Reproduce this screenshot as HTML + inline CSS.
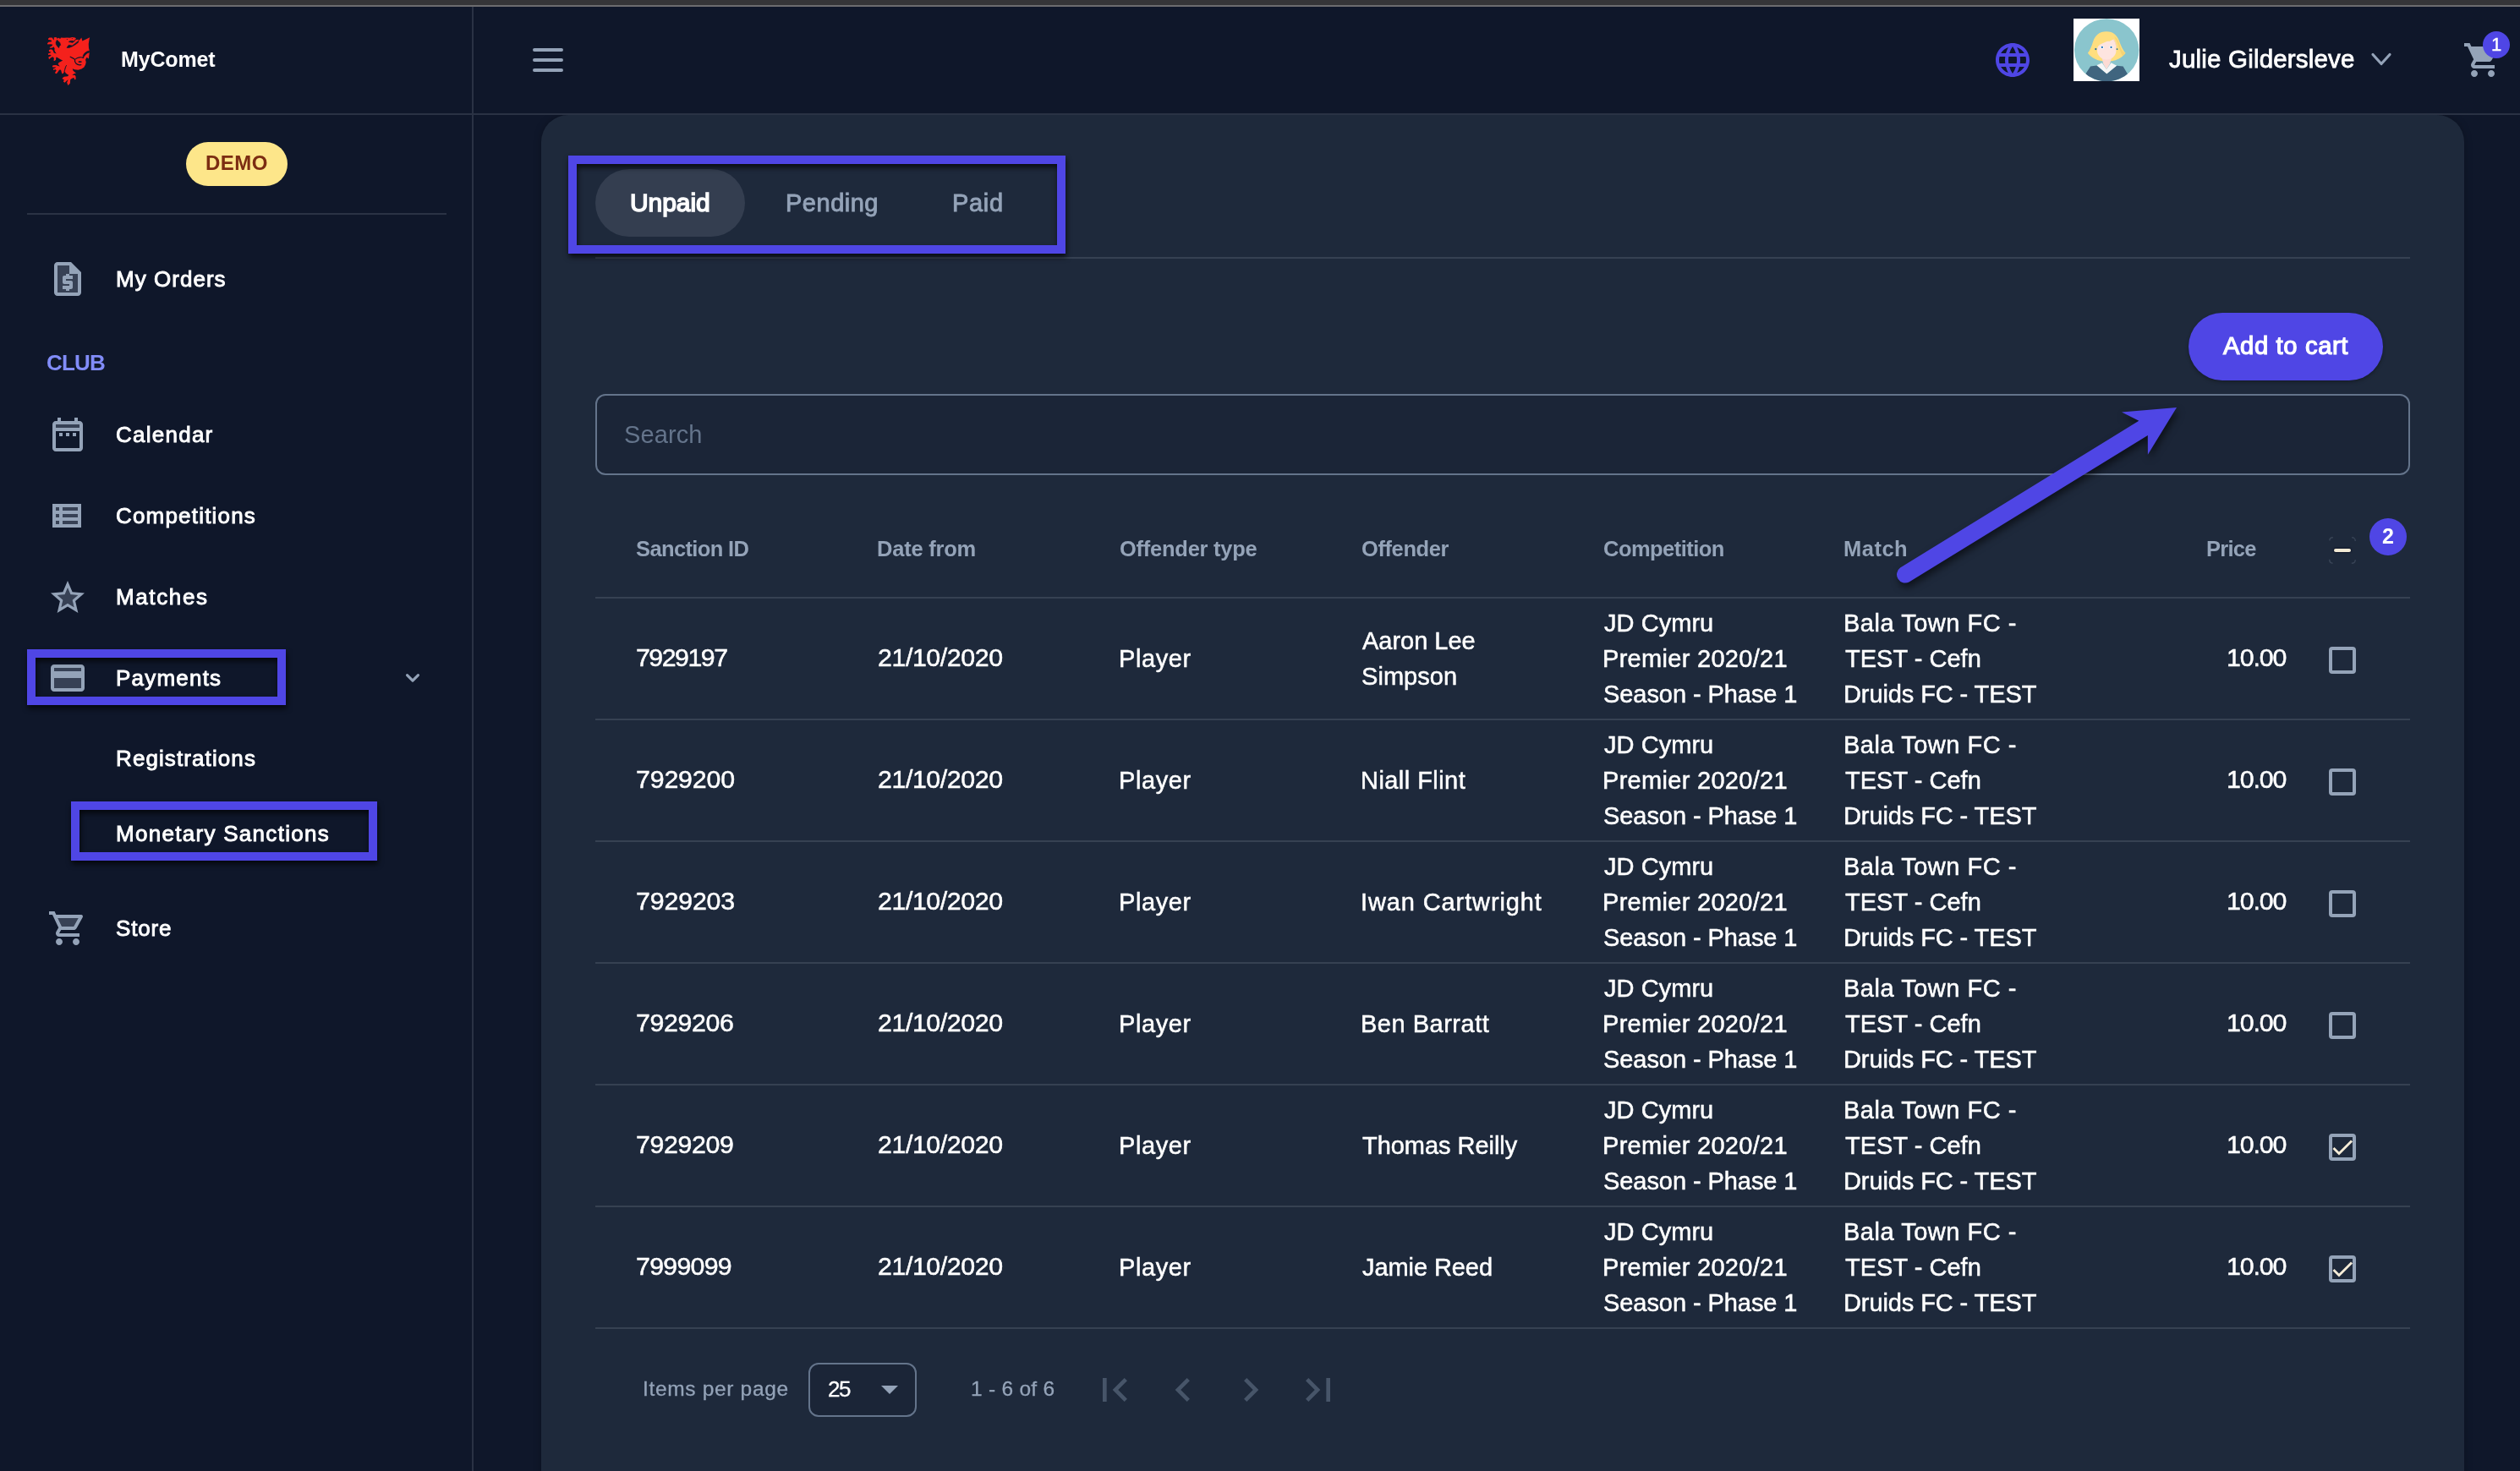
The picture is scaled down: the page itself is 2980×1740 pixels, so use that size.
<!DOCTYPE html><html><head><meta charset="utf-8"><title>MyComet</title><style>
*{box-sizing:border-box;margin:0;padding:0}
html,body{width:2980px;height:1740px;background:#0f172a}
body{position:relative;font-family:"Liberation Sans",sans-serif;color:#fff;-webkit-font-smoothing:antialiased}
.a{position:absolute}
.t{position:absolute;white-space:nowrap;line-height:40px;height:40px;will-change:transform}
.nav{font-size:26px;margin-top:-.5px;color:#fff;-webkit-text-stroke:.9px #fff}
.td{font-size:29px;color:#fff;-webkit-text-stroke:.5px #fff;margin-top:-.9px}
.num{font-size:30.3px;margin-top:-1.1px}
.th{font-size:25.5px;font-weight:bold;color:#94a3b8;margin-top:-1.3px}
.mut{color:#94a3b8}
.ic{position:absolute;width:48px;height:48px;fill:#94a3b8}
.ic .tt{opacity:.3}
.hl{position:absolute;border:10px solid #4f46e5;filter:drop-shadow(1.5px 4px 3px rgba(0,0,0,.7))}
.sep{position:absolute;left:704px;width:2146px;height:2px;background:#364152}
.cb{position:absolute;left:2754px;width:32px;height:32px;border:4px solid #94a3b8;border-radius:4px}
.cb svg{position:absolute;left:-4px;top:-4px;width:32px;height:32px}
.pg{position:absolute;top:1616px;width:56px;height:56px;fill:#475569}
</style></head><body>
<div class="a" style="left:0;top:0;width:2980px;height:6px;background:#353538"></div>
<div class="a" style="left:0;top:6px;width:2980px;height:2px;background:#6c6c6f"></div>
<div class="a" style="left:558px;top:8px;width:2px;height:1732px;background:#2a3244"></div>
<div class="a" style="left:0;top:134px;width:2980px;height:2px;background:#2a3244"></div>
<div class="a" style="left:560px;top:136px;width:2420px;height:1604px;overflow:hidden"><div class="a" style="left:80px;top:0;width:2274px;height:1700px;background:#1e293b;border-radius:32px;box-shadow:0 0 10px rgba(0,0,0,.25)"></div></div>
<svg class="a" style="left:52px;top:40px;width:60px;height:63px" viewBox="52 40 60 63"><path fill="#f4211c" d="M63.67 44.40L65.33 43.93L67.24 44.52L67.60 45.95L68.67 45.12L69.62 44.76L70.57 45.71L71.76 45.48L71.88 44.40L75.81 44.64L79.38 44.40L82.48 44.76L85.33 43.93L88.67 44.40L89.98 45.48L89.38 46.55L87.71 47.26L90.57 46.90L92.83 46.79L92.48 47.86L93.90 47.38L96.40 44.52L97.36 48.57L106.17 44.17L105.45 47.14L104.74 51.90L104.98 56.67L105.69 59.52L105.81 62.62L105.21 66.19L104.98 69.52L103.19 68.33L102.36 68.10L101.05 70.71L101.76 73.48L101.05 76.57L99.38 79.43L96.52 81.57L92.48 82.76L88.19 82.29L85.81 81.33L86.29 83.24L88.19 85.14L90.10 86.33L87.24 87.52L85.33 88.71L88.67 88.95L89.62 90.86L89.50 93.95L88.31 94.19L87.24 91.81L84.38 93.24L83.19 94.19L82.95 97.76L82.71 98.71L80.57 101.10L79.86 99.43L79.14 97.76L80.57 94.19L79.38 94.90L76.52 97.76L74.86 96.57L75.81 94.19L74.38 93.48L73.43 93.24L74.14 92.05L75.81 90.86L80.10 90.14L81.29 88.71L79.38 87.76L77.71 86.57L76.76 84.67L75.57 85.38L74.74 86.81L73.67 87.40L72.95 86.10L72.24 83.24L71.05 82.29L69.62 83.24L69.14 84.19L67.24 86.81L66.05 87.29L64.98 86.10L66.76 83.24L65.33 82.05L63.19 82.88L62.83 81.57L65.33 80.38L66.29 79.55L62.48 79.43L61.76 78.48L62.71 77.17L66.29 76.93L68.67 78.00L70.81 78.60L69.14 76.57L68.67 75.62L69.62 73.95L73.43 72.05L74.14 71.57L72.48 70.86L71.05 69.90L68.67 68.48L66.76 67.62L66.29 68.10L66.05 70.71L64.62 72.02L63.43 71.67L63.90 69.29L63.19 67.86L62.00 67.14L59.86 68.57L58.43 70.12L57.60 69.29L57.36 67.38L59.86 66.19L60.57 65.00L58.90 64.76L57.12 65.00L56.88 63.57L59.86 62.14L60.33 61.43L57.95 60.95L57.83 59.29L59.86 58.33L62.00 58.81L63.19 60.95L63.67 62.38L66.76 63.57L65.33 61.43L64.38 59.52L64.62 57.14L63.43 55.24L62.00 56.43L59.14 56.67L58.55 55.95L61.52 54.29L62.24 52.86L59.86 52.14L56.29 52.38L55.93 51.19L57.48 49.76L60.81 49.29L61.05 48.10L59.14 47.14L57.12 46.90L56.88 45.71L58.43 44.40L61.52 44.40L62.71 45.95L63.19 47.62L63.90 46.19Z"/><path fill="#0f172a" stroke="#0f172a" stroke-width=".55" stroke-linejoin="round" d="M67.48 47.14L70.81 50.48L71.76 53.33L70.33 54.29L69.62 56.67L68.19 55.24L66.29 52.38L66.05 50.00ZM81.17 49.52L82.95 48.45L85.33 48.33L87.24 48.81L89.14 47.14L87.71 49.05L85.81 50.48L83.67 50.00ZM79.02 56.43L80.10 54.52L81.52 53.33L85.33 54.05L88.19 51.90L91.29 49.52L92.95 48.33L92.48 50.24L89.14 52.86L85.33 55.00L81.76 56.43ZM105.57 60.00L102.71 60.95L100.10 62.86L98.43 65.24L97.95 68.57L99.38 66.90L101.05 64.76L103.43 62.86L105.57 62.14ZM78.79 77.05L77.95 78.48L76.76 82.29L75.93 85.14L76.52 82.76L77.48 79.19Z"/><ellipse cx="79.38" cy="46.43" rx="0.67" ry="0.48" fill="#0f172a"/><ellipse cx="85.33" cy="45.48" rx="0.62" ry="0.48" fill="#0f172a"/><path d="M83.19 67.26L87.24 69.40L88.55 70.26C87.71 74.19 91.05 77.52 95.81 76.69" fill="none" stroke="#0f172a" stroke-width="1.25" stroke-linecap="round" stroke-linejoin="round"/><path d="M89.62 69.67C92.00 67.76 96.29 67.29 98.67 68.48" fill="none" stroke="#0f172a" stroke-width="1.1" stroke-linecap="round"/><ellipse cx="94.62" cy="73.12" rx="2.26" ry="0.90" fill="#0f172a"/></svg>
<div class="t " style="left:143.2px;top:49.7px;font-size:25px;font-weight:bold;letter-spacing:-0.16px">MyComet</div>
<div class="a" style="left:220px;top:167.5px;width:120px;height:52.5px;border-radius:27px;background:#fde68a"></div>
<div class="t " style="left:243.2px;top:173.3px;font-size:24px;font-weight:bold;color:#7c2d12;letter-spacing:0.44px">DEMO</div>
<div class="a" style="left:32px;top:252px;width:496px;height:2px;background:#2a3244"></div>
<svg class="ic" style="left:56px;top:306.0px;" viewBox="0 0 24 24"><path class="tt" d="M6 4h7v5h5v11H6z"/><path d="M14 2H6c-1.1 0-2 .9-2 2v16c0 1.1.9 2 2 2h12c1.1 0 2-.9 2-2V8l-6-6zM6 20V4h7v5h5v11H6z"/><path d="M11 19h2v-1h1c.55 0 1-.45 1-1v-3c0-.55-.45-1-1-1h-3v-1h4v-2h-2V9h-2v1h-1c-.55 0-1 .45-1 1v3c0 .55.45 1 1 1h3v1H9v2h2v1z"/></svg>
<div class="t nav" style="left:136.5px;top:310.0px;;letter-spacing:1.03px">My Orders</div>
<svg class="ic" style="left:56px;top:489.7px;" viewBox="0 0 24 24"><path class="tt" d="M5 8h14V6H5z"/><path d="M7 11h2v2H7v-2zm14-5v14c0 1.1-.9 2-2 2H5c-1.11 0-2-.9-2-2l.01-14c0-1.1.88-2 1.99-2h1V2h2v2h8V2h2v2h1c1.1 0 2 .9 2 2zM5 8h14V6H5v2zm14 12V10H5v10h14zm-4-7h2v-2h-2v2zm-4 0h2v-2h-2v2z"/></svg>
<div class="t nav" style="left:137.3px;top:494.5px;;letter-spacing:1.25px">Calendar</div>
<svg class="ic" style="left:56px;top:586.0px;" viewBox="0 0 24 24"><path class="tt" d="M5 11h2v2H5zm0 4h2v2H5zm0-8h2v2H5zm4 0h9v2H9zm0 8h9v2H9zm0-4h9v2H9z"/><path d="M3 5v14h17V5H3zm4 2v2H5V7h2zm-2 6v-2h2v2H5zm0 2h2v2H5v-2zm13 2H9v-2h9v2zm0-4H9v-2h9v2zm0-4H9V7h9v2z"/></svg>
<div class="t nav" style="left:137.3px;top:590.0px;;letter-spacing:1.19px">Competitions</div>
<svg class="ic" style="left:56px;top:682.8px;" viewBox="0 0 24 24"><path class="tt" d="M12 15.4l-3.76 2.27 1-4.28-3.32-2.88 4.38-.38L12 6.1l1.71 4.04 4.38.38-3.32 2.88 1 4.28z"/><path d="M22 9.24l-7.19-.62L12 2 9.19 8.63 2 9.24l5.46 4.73L5.82 21 12 17.27 18.18 21l-1.63-7.03L22 9.24zM12 15.4l-3.76 2.27 1-4.28-3.32-2.88 4.38-.38L12 6.1l1.71 4.04 4.38.38-3.32 2.88 1 4.28L12 15.4z"/></svg>
<div class="t nav" style="left:136.5px;top:686.0px;;letter-spacing:1.62px">Matches</div>
<svg class="ic" style="left:56px;top:778.0px;" viewBox="0 0 24 24"><path class="tt" d="M4 12h16v6H4zm0-6h16v2H4z"/><path d="M20 4H4c-1.11 0-1.99.89-1.99 2L2 18c0 1.11.89 2 2 2h16c1.11 0 2-.89 2-2V6c0-1.11-.89-2-2-2zm0 14H4v-6h16v6zm0-10H4V6h16v2z"/></svg>
<div class="t nav" style="left:136.5px;top:782.0px;;letter-spacing:1.21px">Payments</div>
<div class="t nav" style="left:136.5px;top:877.8px;;letter-spacing:1.10px">Registrations</div>
<div class="t nav" style="left:136.5px;top:966.0px;;letter-spacing:1.29px">Monetary Sanctions</div>
<svg class="ic" style="left:56px;top:1074.2px;" viewBox="0 0 24 24"><path class="tt" d="M15.55 11l2.76-5H6.16l2.37 5z"/><path d="M15.55 13c.75 0 1.41-.41 1.75-1.03l3.58-6.49c.37-.66-.11-1.48-.87-1.48H5.21l-.94-2H1v2h2l3.6 7.59-1.35 2.44C4.52 15.37 5.48 17 7 17h12v-2H7l1.1-2h7.45zM6.16 6h12.15l-2.76 5H8.53L6.16 6zM7 18c-1.1 0-1.99.9-1.99 2S5.9 22 7 22s2-.9 2-2-.9-2-2-2zm10 0c-1.1 0-1.99.9-1.99 2s.89 2 1.99 2 2-.9 2-2-.9-2-2-2z"/></svg>
<div class="t nav" style="left:137.4px;top:1078.2px;;letter-spacing:0.82px">Store</div>
<div class="t " style="left:55.3px;top:409.3px;font-size:26px;font-weight:bold;color:#818cf8;letter-spacing:-0.82px">CLUB</div>
<svg class="a" style="left:476px;top:790px;width:24px;height:24px" viewBox="0 0 24 24"><path d="M5.5 8.6 12 15.2 18.5 8.6" fill="none" stroke="#94a3b8" stroke-width="3.1" stroke-linecap="round" stroke-linejoin="round"/></svg>
<div class="hl" style="left:32px;top:768px;width:306px;height:66px"></div>
<div class="hl" style="left:84px;top:948px;width:362px;height:70px"></div>
<svg class="a" style="left:624px;top:47px;width:48px;height:48px" viewBox="0 0 24 24"><path d="M4 6h16M4 12h16M4 18h16" fill="none" stroke="#94a3b8" stroke-width="2" stroke-linecap="round"/></svg>
<svg class="ic" style="left:2356px;top:47px;fill:#4f46e5" viewBox="0 0 24 24"><path d="M11.99 2C6.47 2 2 6.48 2 12s4.47 10 9.99 10C17.52 22 22 17.52 22 12S17.52 2 11.99 2zm6.93 6h-2.95c-.32-1.25-.78-2.45-1.38-3.56 1.84.63 3.37 1.91 4.33 3.56zM12 4.04c.83 1.2 1.48 2.53 1.91 3.96h-3.82c.43-1.43 1.08-2.76 1.91-3.96zM4.26 14C4.1 13.36 4 12.69 4 12s.1-1.36.26-2h3.38c-.08.66-.14 1.32-.14 2 0 .68.06 1.34.14 2H4.26zm.82 2h2.95c.32 1.25.78 2.45 1.38 3.56-1.84-.63-3.37-1.9-4.33-3.56zm2.95-8H5.08c.96-1.66 2.49-2.93 4.33-3.56C8.81 5.55 8.35 6.75 8.03 8zM12 19.96c-.83-1.2-1.48-2.53-1.91-3.96h3.82c-.43 1.43-1.08 2.76-1.91 3.96zM14.34 14H9.66c-.09-.66-.16-1.32-.16-2 0-.68.07-1.35.16-2h4.68c.09.65.16 1.32.16 2 0 .68-.07 1.34-.16 2zm.25 5.56c.6-1.11 1.06-2.31 1.38-3.56h2.95c-.96 1.65-2.49 2.93-4.33 3.56zM16.36 14c.08-.66.14-1.32.14-2 0-.68-.06-1.34-.14-2h3.38c.16.64.26 1.31.26 2s-.1 1.36-.26 2h-3.38z"/></svg>
<svg class="a" style="left:2451.8px;top:21.7px;width:78.3px;height:74.6px" viewBox="192 125 1280 1220" preserveAspectRatio="none"><defs><clipPath id="avc"><ellipse cx="833" cy="735" rx="625" ry="606"/></clipPath></defs><rect x="192" y="125" width="1280" height="1220" fill="#fff"/><ellipse cx="833" cy="735" rx="625" ry="606" fill="#8ac5cd"/><g clip-path="url(#avc)"><path d="M830 375C690 375 610 450 570 570C540 670 510 740 468 790C540 880 640 930 740 945L930 945C1030 930 1130 880 1197 790C1150 740 1110 650 1080 570C1040 450 960 375 830 375Z" fill="#ffde7f"/><path d="M740 880L930 880L895 1000L830 1110L768 1000Z" fill="#fcdbd4"/><ellipse cx="833" cy="738" rx="184" ry="180" fill="#fde4df"/><path d="M860 580L962 526L1002 600L1017 690L900 660Z" fill="#fde4df"/><path d="M962 526C985 560 1005 610 1017 690L1030 690C1020 620 1000 560 975 520Z" fill="#f7d3cf"/><path d="M640 720C640 640 740 600 962 526C900 400 690 420 630 580Z" fill="#ffde7f"/><path d="M975 470C1040 500 1080 600 1100 680C1125 740 1160 775 1197 790C1180 815 1160 835 1140 850C1110 800 1080 720 1060 650C1040 580 1010 520 975 470Z" fill="#f6d374"/><path d="M640 1030L745 980L830 1110L920 980L1030 1035L835 1195Z" fill="#f6f6f6"/><path d="M520 1050L640 1032L835 1195L1030 1035L1150 1050L1240 1200L1100 1400L560 1400L425 1195Z" fill="#40657f"/><ellipse cx="745" cy="680" rx="38" ry="28" fill="#fff"/><ellipse cx="920" cy="680" rx="38" ry="28" fill="#fff"/><circle cx="745" cy="680" r="19" fill="#1f6fb5"/><circle cx="920" cy="680" r="19" fill="#1f6fb5"/><circle cx="622" cy="715" r="18" fill="#1565a8"/><circle cx="1035" cy="715" r="15" fill="#1565a8"/></g></svg>

<div class="t " style="left:2564.5px;top:49.6px;font-size:29.5px;-webkit-text-stroke:.8px #fff;letter-spacing:0.19px">Julie Gildersleve</div>
<svg class="a" style="left:2800px;top:56px;width:32px;height:28px" viewBox="0 0 32 28"><path d="M6 8.5 16 19.5 26 8.5" fill="none" stroke="#94a3b8" stroke-width="3.2" stroke-linecap="round" stroke-linejoin="round"/></svg>
<svg class="ic" style="left:2911.5px;top:47px;" viewBox="0 0 24 24"><path d="M7 18c-1.1 0-1.99.9-1.99 2S5.9 22 7 22s2-.9 2-2-.9-2-2-2zM1 2v2h2l3.6 7.59-1.35 2.45c-.16.28-.25.61-.25.96 0 1.100.9 2 2 2h12v-2H7.420c-.14 0-.25-.11-.25-.25l.03-.12.9-1.63h7.450c.75 0 1.410-.41 1.750-1.030l3.580-6.490c.08-.14.12-.31.12-.48 0-.55-.45-1-1-1H5.210l-.94-2H1zm16 16c-1.100 0-1.990.9-1.990 2s.89 2 1.990 2 2-.9 2-2-.9-2-2-2z"/></svg>
<div class="a" style="left:2936px;top:36.7px;width:32.3px;height:32.3px;border-radius:50%;background:#4f46e5"></div>
<div class="t " style="left:2945.6px;top:33.1px;font-size:22px;-webkit-text-stroke:.4px #fff">1</div>
<div class="a" style="left:704px;top:304px;width:2146px;height:2px;background:#364152"></div>
<div class="a" style="left:704px;top:200px;width:177px;height:80px;border-radius:40px;background:#343e50"></div>
<div class="t " style="left:744.6px;top:219.8px;font-size:30px;-webkit-text-stroke:1.5px #fff;letter-spacing:-0.07px">Unpaid</div>
<div class="t mut" style="left:928.7px;top:219.7px;font-size:29px;-webkit-text-stroke:.9px #94a3b8;letter-spacing:0.51px">Pending</div>
<div class="t mut" style="left:1125.7px;top:219.7px;font-size:29px;-webkit-text-stroke:.9px #94a3b8;letter-spacing:0.68px">Paid</div>
<div class="hl" style="left:672px;top:184px;width:588px;height:116px"></div>
<div class="a" style="left:2588px;top:370px;width:230px;height:80px;border-radius:40px;background:#4f46e5;box-shadow:0 2px 4px rgba(0,0,0,.3)"></div>
<div class="t " style="left:2629.3px;top:389.1px;font-size:29.2px;-webkit-text-stroke:1.2px #fff;letter-spacing:0.63px">Add to cart</div>
<div class="a" style="left:704px;top:466px;width:2146px;height:96px;border:2px solid #64748b;border-radius:12px;background:#1b2537"></div>
<div class="t " style="left:738.2px;top:494.2px;font-size:29px;color:#64748b;letter-spacing:0.11px">Search</div>
<div class="t th" style="left:752.4px;top:630.0px;;letter-spacing:-0.63px">Sanction ID</div>
<div class="t th" style="left:1037.3px;top:630.0px;;letter-spacing:-0.23px">Date from</div>
<div class="t th" style="left:1323.7px;top:630.0px;;letter-spacing:-0.25px">Offender type</div>
<div class="t th" style="left:1609.8px;top:630.0px;;letter-spacing:-0.40px">Offender</div>
<div class="t th" style="left:1895.7px;top:630.0px;;letter-spacing:-0.53px">Competition</div>
<div class="t th" style="left:2180.3px;top:630.0px;;letter-spacing:0.49px">Match</div>
<div class="t th" style="left:2608.5px;top:630.0px;;letter-spacing:-0.76px">Price</div>
<svg class="a" style="left:2752px;top:633px;width:36px;height:36px" viewBox="-2 -2 36 36"><rect x="0.75" y="0.75" width="30.5" height="30.5" rx="4" fill="none" stroke="#94a3b8" stroke-opacity=".22" stroke-width="1.5" stroke-dasharray="6.5 22.28" stroke-dashoffset="-22.4"/></svg>
<div class="a" style="left:2760px;top:648.7px;width:20.2px;height:4.5px;border-radius:2.3px;background:#f3ead5;box-shadow:0 0 1.5px .8px rgba(8,12,30,.75)"></div>
<div class="a" style="left:2802px;top:613px;width:44px;height:44px;border-radius:50%;background:#4f46e5"></div>
<div class="t " style="left:2817.1px;top:614.4px;font-size:25px;font-weight:bold">2</div>
<div class="sep" style="top:706px"></div>
<div class="t td num" style="left:751.6px;top:759.5px;;letter-spacing:-1.48px">7929197</div>
<div class="t td num" style="left:1037.6px;top:759.5px;;letter-spacing:-0.40px">21/10/2020</div>
<div class="t td" style="left:1323.0px;top:759.5px;;letter-spacing:0.61px">Player</div>
<div class="t td" style="left:1611.2px;top:738.5px;;letter-spacing:-0.02px">Aaron Lee</div>
<div class="t td" style="left:1610.1px;top:780.5px;;letter-spacing:0.05px">Simpson</div>
<div class="t td" style="left:1896.9px;top:717.5px;;letter-spacing:0.05px">JD Cymru</div>
<div class="t td" style="left:1895.0px;top:759.5px;;letter-spacing:0.30px">Premier 2020/21</div>
<div class="t td" style="left:1896.0px;top:801.5px;;letter-spacing:-0.07px">Season - Phase 1</div>
<div class="t td" style="left:2180.3px;top:717.5px;;letter-spacing:0.52px">Bala Town FC -</div>
<div class="t td" style="left:2182.2px;top:759.5px;;letter-spacing:0.02px">TEST - Cefn</div>
<div class="t td" style="left:2180.3px;top:801.5px;;letter-spacing:-0.10px">Druids FC - TEST</div>
<div class="t td num" style="left:2632.6px;top:759.5px;;letter-spacing:-1.14px">10.00</div>
<div class="cb" style="top:765px"></div>
<div class="sep" style="top:850px"></div>
<div class="t td num" style="left:751.6px;top:903.5px;;letter-spacing:-0.15px">7929200</div>
<div class="t td num" style="left:1037.6px;top:903.5px;;letter-spacing:-0.40px">21/10/2020</div>
<div class="t td" style="left:1323.0px;top:903.5px;;letter-spacing:0.61px">Player</div>
<div class="t td" style="left:1609.1px;top:903.5px;;letter-spacing:0.45px">Niall Flint</div>
<div class="t td" style="left:1896.9px;top:861.5px;;letter-spacing:0.05px">JD Cymru</div>
<div class="t td" style="left:1895.0px;top:903.5px;;letter-spacing:0.30px">Premier 2020/21</div>
<div class="t td" style="left:1896.0px;top:945.5px;;letter-spacing:-0.07px">Season - Phase 1</div>
<div class="t td" style="left:2180.3px;top:861.5px;;letter-spacing:0.52px">Bala Town FC -</div>
<div class="t td" style="left:2182.2px;top:903.5px;;letter-spacing:0.02px">TEST - Cefn</div>
<div class="t td" style="left:2180.3px;top:945.5px;;letter-spacing:-0.10px">Druids FC - TEST</div>
<div class="t td num" style="left:2632.6px;top:903.5px;;letter-spacing:-1.14px">10.00</div>
<div class="cb" style="top:909px"></div>
<div class="sep" style="top:994px"></div>
<div class="t td num" style="left:751.6px;top:1047.5px;;letter-spacing:-0.13px">7929203</div>
<div class="t td num" style="left:1037.6px;top:1047.5px;;letter-spacing:-0.40px">21/10/2020</div>
<div class="t td" style="left:1323.0px;top:1047.5px;;letter-spacing:0.61px">Player</div>
<div class="t td" style="left:1609.0px;top:1047.5px;;letter-spacing:0.89px">Iwan Cartwright</div>
<div class="t td" style="left:1896.9px;top:1005.5px;;letter-spacing:0.05px">JD Cymru</div>
<div class="t td" style="left:1895.0px;top:1047.5px;;letter-spacing:0.30px">Premier 2020/21</div>
<div class="t td" style="left:1896.0px;top:1089.5px;;letter-spacing:-0.07px">Season - Phase 1</div>
<div class="t td" style="left:2180.3px;top:1005.5px;;letter-spacing:0.52px">Bala Town FC -</div>
<div class="t td" style="left:2182.2px;top:1047.5px;;letter-spacing:0.02px">TEST - Cefn</div>
<div class="t td" style="left:2180.3px;top:1089.5px;;letter-spacing:-0.10px">Druids FC - TEST</div>
<div class="t td num" style="left:2632.6px;top:1047.5px;;letter-spacing:-1.14px">10.00</div>
<div class="cb" style="top:1053px"></div>
<div class="sep" style="top:1138px"></div>
<div class="t td num" style="left:751.6px;top:1191.5px;;letter-spacing:-0.34px">7929206</div>
<div class="t td num" style="left:1037.6px;top:1191.5px;;letter-spacing:-0.40px">21/10/2020</div>
<div class="t td" style="left:1323.0px;top:1191.5px;;letter-spacing:0.61px">Player</div>
<div class="t td" style="left:1609.1px;top:1191.5px;;letter-spacing:0.51px">Ben Barratt</div>
<div class="t td" style="left:1896.9px;top:1149.5px;;letter-spacing:0.05px">JD Cymru</div>
<div class="t td" style="left:1895.0px;top:1191.5px;;letter-spacing:0.30px">Premier 2020/21</div>
<div class="t td" style="left:1896.0px;top:1233.5px;;letter-spacing:-0.07px">Season - Phase 1</div>
<div class="t td" style="left:2180.3px;top:1149.5px;;letter-spacing:0.52px">Bala Town FC -</div>
<div class="t td" style="left:2182.2px;top:1191.5px;;letter-spacing:0.02px">TEST - Cefn</div>
<div class="t td" style="left:2180.3px;top:1233.5px;;letter-spacing:-0.10px">Druids FC - TEST</div>
<div class="t td num" style="left:2632.6px;top:1191.5px;;letter-spacing:-1.14px">10.00</div>
<div class="cb" style="top:1197px"></div>
<div class="sep" style="top:1282px"></div>
<div class="t td num" style="left:751.6px;top:1335.5px;;letter-spacing:-0.33px">7929209</div>
<div class="t td num" style="left:1037.6px;top:1335.5px;;letter-spacing:-0.40px">21/10/2020</div>
<div class="t td" style="left:1323.0px;top:1335.5px;;letter-spacing:0.61px">Player</div>
<div class="t td" style="left:1611.0px;top:1335.5px;;letter-spacing:-0.04px">Thomas Reilly</div>
<div class="t td" style="left:1896.9px;top:1293.5px;;letter-spacing:0.05px">JD Cymru</div>
<div class="t td" style="left:1895.0px;top:1335.5px;;letter-spacing:0.30px">Premier 2020/21</div>
<div class="t td" style="left:1896.0px;top:1377.5px;;letter-spacing:-0.07px">Season - Phase 1</div>
<div class="t td" style="left:2180.3px;top:1293.5px;;letter-spacing:0.52px">Bala Town FC -</div>
<div class="t td" style="left:2182.2px;top:1335.5px;;letter-spacing:0.02px">TEST - Cefn</div>
<div class="t td" style="left:2180.3px;top:1377.5px;;letter-spacing:-0.10px">Druids FC - TEST</div>
<div class="t td num" style="left:2632.6px;top:1335.5px;;letter-spacing:-1.14px">10.00</div>
<div class="cb" style="top:1341px"><svg viewBox="0 0 24 24"><path d="M4.1 12.7 9 17.6 20.3 6.3" fill="none" stroke="#f5ecd7" stroke-width="2.13"/></svg></div>
<div class="sep" style="top:1426px"></div>
<div class="t td num" style="left:751.6px;top:1479.5px;;letter-spacing:-0.72px">7999099</div>
<div class="t td num" style="left:1037.6px;top:1479.5px;;letter-spacing:-0.40px">21/10/2020</div>
<div class="t td" style="left:1323.0px;top:1479.5px;;letter-spacing:0.61px">Player</div>
<div class="t td" style="left:1611.0px;top:1479.5px;;letter-spacing:-0.08px">Jamie Reed</div>
<div class="t td" style="left:1896.9px;top:1437.5px;;letter-spacing:0.05px">JD Cymru</div>
<div class="t td" style="left:1895.0px;top:1479.5px;;letter-spacing:0.30px">Premier 2020/21</div>
<div class="t td" style="left:1896.0px;top:1521.5px;;letter-spacing:-0.07px">Season - Phase 1</div>
<div class="t td" style="left:2180.3px;top:1437.5px;;letter-spacing:0.52px">Bala Town FC -</div>
<div class="t td" style="left:2182.2px;top:1479.5px;;letter-spacing:0.02px">TEST - Cefn</div>
<div class="t td" style="left:2180.3px;top:1521.5px;;letter-spacing:-0.10px">Druids FC - TEST</div>
<div class="t td num" style="left:2632.6px;top:1479.5px;;letter-spacing:-1.14px">10.00</div>
<div class="cb" style="top:1485px"><svg viewBox="0 0 24 24"><path d="M4.1 12.7 9 17.6 20.3 6.3" fill="none" stroke="#f5ecd7" stroke-width="2.13"/></svg></div>
<div class="sep" style="top:1570px"></div>
<div class="t mut" style="left:759.7px;top:1623.2px;font-size:24.5px;-webkit-text-stroke:.3px #94a3b8;letter-spacing:0.67px">Items per page</div>
<div class="a" style="left:956px;top:1612px;width:128px;height:64px;border:2px solid #64748b;border-radius:12px;background:#1b2537"></div>
<div class="t " style="left:978.8px;top:1623.4px;font-size:26px;-webkit-text-stroke:.3px #fff;letter-spacing:-1.34px">25</div>
<svg class="a" style="left:1042px;top:1639px;width:20px;height:10px" viewBox="0 0 20 10"><path d="M0 0h20L10 10z" fill="#94a3b8"/></svg>
<div class="t mut" style="left:1148.3px;top:1623.2px;font-size:24.5px;-webkit-text-stroke:.3px #94a3b8;letter-spacing:0.26px">1 - 6 of 6</div>
<svg class="pg" style="left:1290.4px" viewBox="0 0 24 24"><path d="M18.41 16.59L13.82 12l4.59-4.59L17 6l-6 6 6 6zM6 6h2v12H6z"/></svg>
<svg class="pg" style="left:1371px" viewBox="0 0 24 24"><path d="M15.41 7.41L14 6l-6 6 6 6 1.41-1.41L10.83 12z"/></svg>
<svg class="pg" style="left:1451px" viewBox="0 0 24 24"><path d="M10 6L8.59 7.41 13.17 12l-4.58 4.59L10 18l6-6z"/></svg>
<svg class="pg" style="left:1531px" viewBox="0 0 24 24"><path d="M5.59 7.41L10.18 12l-4.59 4.59L7 18l6-6-6-6zM16 6h2v12h-2z"/></svg>
<svg class="a" style="left:2200px;top:440px;width:420px;height:290px;overflow:visible;filter:drop-shadow(2px 5px 4px rgba(0,0,0,.55))" viewBox="0 0 420 290"><path d="M47.1 231.5 L329.3 57.8 L309.0 47.5 L374.0 42.1 L339.9 97.7 L339.8 74.9 L57.5 248.5 A10 10 0 0 1 47.1 231.5Z" fill="#4f46e5"/></svg>
</body></html>
